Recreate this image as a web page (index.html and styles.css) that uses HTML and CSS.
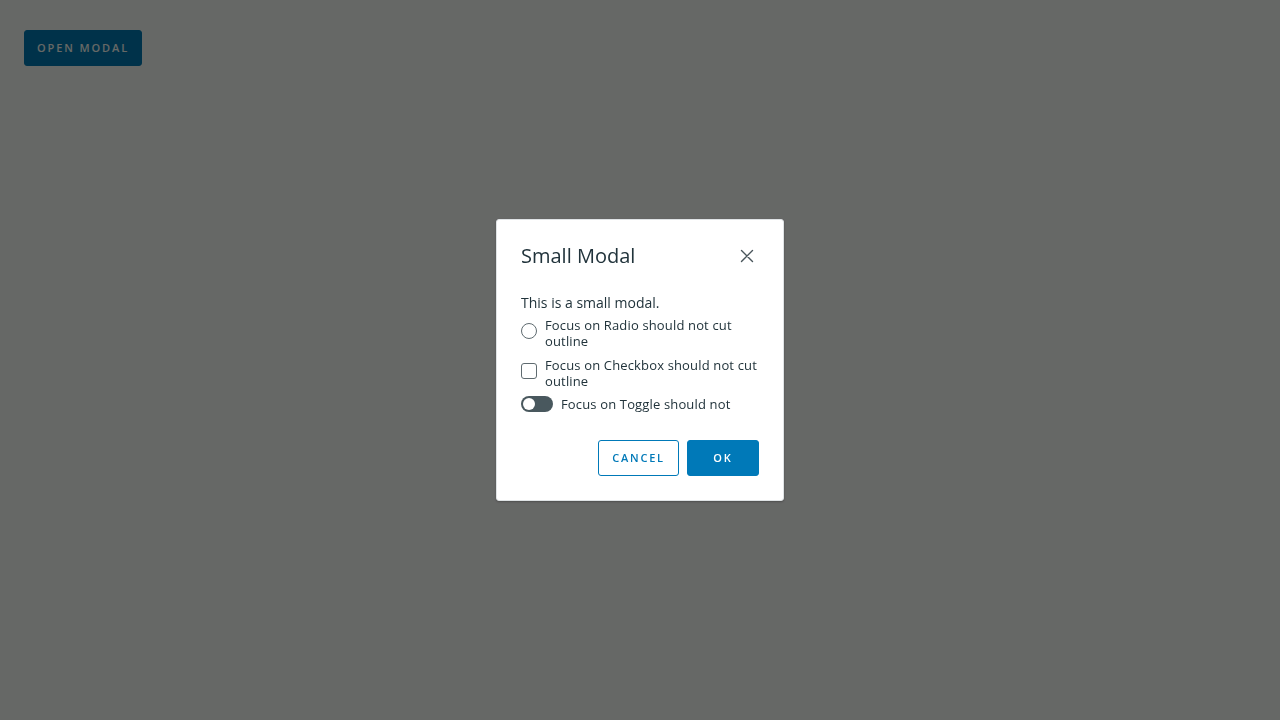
FILE: index.html
```html
<!DOCTYPE html>
<html>
<head>
<meta charset="utf-8">
<link rel="stylesheet" href="styles.css">
</head>
<body>
<main class="page">
  <button class="btn btn-primary btn-open">Open Modal</button>
</main>
<div class="backdrop">
  <div class="modal" role="dialog">
    <div class="modal-header">
      <h3 class="modal-title">Small Modal</h3>
      <button class="close" aria-label="Close">
        <svg width="16" height="16" viewBox="0 0 16 16"><path d="M2.5 2.5 L13.5 13.5 M13.5 2.5 L2.5 13.5" stroke="#49555b" stroke-width="1.4" fill="none" stroke-linecap="round"/></svg>
      </button>
    </div>
    <div class="modal-body">
      <p class="intro">This is a small modal.</p>
      <label class="field">
        <span class="radio"></span>
        <span class="field-label">Focus on Radio should not cut outline</span>
      </label>
      <label class="field">
        <span class="checkbox"></span>
        <span class="field-label">Focus on Checkbox should not cut outline</span>
      </label>
      <label class="field toggle-field">
        <span class="toggle"><span class="knob"></span></span>
        <span class="field-label">Focus on Toggle should not</span>
      </label>
    </div>
    <div class="modal-footer">
      <button class="btn btn-outline">Cancel</button>
      <button class="btn btn-primary btn-ok">OK</button>
    </div>
  </div>
</div>
</body>
</html>
```
FILE: styles.css
```css
* { box-sizing: border-box; }
html, body { margin: 0; height: 100%; }
body {
  font-family: "Open Sans", "Noto Sans", sans-serif;
  background: #ffffff;
  color: #21333b;
}
.page { padding: 30px 24px; }
.btn {
  font-family: "Open Sans", "Noto Sans", sans-serif;
  font-size: 11px;
  font-weight: 600;
  letter-spacing: 1.8px;
  text-transform: uppercase;
  height: 36px;
  border-radius: 3px;
  padding: 0 0 2px;
  cursor: pointer;
}
.btn-primary {
  background: #0079b8;
  color: #ffffff;
  border: 1px solid #0079b8;
}
.btn-open { width: 118px; letter-spacing: 1.9px; }
.btn-outline {
  background: #ffffff;
  color: #0079b8;
  border: 1px solid #0079b8;
  width: 81px;
}
.btn-ok { width: 72px; }
.backdrop {
  position: fixed;
  inset: 0;
  background: rgba(0, 3, 0, 0.6);
  display: flex;
  align-items: center;
  justify-content: center;
}
.modal {
  width: 288px;
  height: 282px;
  background: #ffffff;
  border: 1px solid #dfe3e5;
  border-radius: 3px;
  box-shadow: 0 1px 2px rgba(0,0,0,0.25);
  padding: 24px;
  display: flex;
  flex-direction: column;
}
.modal-header {
  display: flex;
  align-items: center;
  justify-content: space-between;
  height: 24px;
}
.modal-title {
  margin: 0;
  font-size: 20px;
  font-weight: 400;
  color: #21333b;
  line-height: 24px;
}
.close {
  background: none;
  border: none;
  padding: 0;
  width: 16px;
  height: 16px;
  margin-right: 4px;
  display: flex;
}
.modal-body {
  margin-top: 25px;
}
.intro {
  margin: 0 0 4px;
  font-size: 14px;
  line-height: 20px;
  color: #21333b;
}
.field {
  display: flex;
  align-items: flex-start;
  gap: 8px;
  font-size: 13px;
  line-height: 16px;
  letter-spacing: 0.15px;
  color: #21333b;
  margin-bottom: 8px;
}
.field-label { flex: 1; }
.radio {
  width: 16px;
  height: 16px;
  border: 1px solid #5f6b70;
  border-radius: 50%;
  margin-top: 6px;
  flex: none;
}
.checkbox {
  width: 16px;
  height: 16px;
  border: 1px solid #5f6b70;
  border-radius: 3px;
  margin-top: 6px;
  flex: none;
}
.toggle-field { align-items: center; margin-top: -1px; }
.toggle {
  width: 32px;
  height: 16px;
  border-radius: 8px;
  background: #49585e;
  flex: none;
  display: flex;
  align-items: center;
  padding: 0 2px;
}
.knob {
  width: 12px;
  height: 12px;
  border-radius: 50%;
  background: #ffffff;
}
.modal-footer {
  margin-top: auto;
  display: flex;
  justify-content: flex-end;
  gap: 8px;
}
```
